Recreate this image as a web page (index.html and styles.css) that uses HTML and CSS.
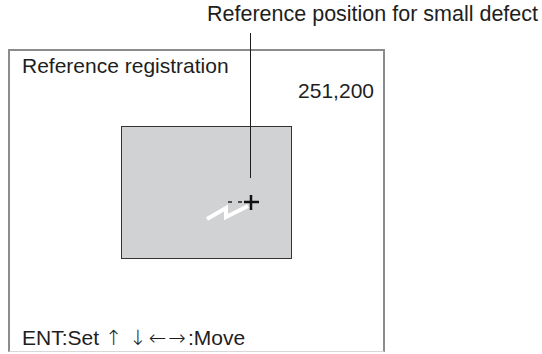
FILE: index.html
```html
<!DOCTYPE html>
<html lang="en">
<head>
  <meta charset="UTF-8" />
  <title>Reference registration</title>
  <meta name="viewport" content="width=device-width, initial-scale=1.0"/>
  <link rel="stylesheet" href="styles.css">
</head>
<body>

  <div class="figure">
    <p class="caption">Reference position for small defect</p>
    <span class="leader"></span>

    <div class="screen">
      <div class="title">Reference registration</div>
      <div class="coords">251,200</div>

      <div class="picture">
        <svg width="171" height="133" viewBox="0 0 171 133">
          <!-- small defect mark -->
          <polyline points="86,93 105,82 105,91 127,80" fill="none" stroke="#fff" stroke-width="4"/>
          <!-- dashed guide to the cursor -->
          <line x1="107" y1="76" x2="111" y2="76" stroke="#222" stroke-width="1.5"/>
          <line x1="117" y1="76" x2="121" y2="76" stroke="#222" stroke-width="1.5"/>
          <!-- cursor -->
          <line x1="123" y1="76" x2="138" y2="76" stroke="#111" stroke-width="2.5"/>
          <line x1="130" y1="69" x2="130" y2="84" stroke="#111" stroke-width="2.5"/>
        </svg>
      </div>

      <div class="footer">ENT:Set <span class="arrows">↑ ↓←→</span>:Move</div>
    </div>
  </div>

</body>
</html>
```

FILE: styles.css
```css
:root {
  --frame: #8c8c8e;
  --ink: #1e1e1e;
  --panel: #d1d2d4;
}

* {
  box-sizing: border-box;
  margin: 0;
  padding: 0;
}

body {
  font-family: 'Liberation Sans', Arial, sans-serif;
  background: #fff;
  color: var(--ink);
}

.figure {
  position: relative;
  width: 542px;
  height: 354px;
  padding: 2px 0 0 8px;
}

.caption {
  font-size: 21.5px;
  line-height: 24px;
  padding-left: 199px;
  height: 47px;
}

.leader {
  position: absolute;
  left: 250px;
  top: 33px;
  width: 1px;
  height: 145px;
  background: var(--ink);
}

.screen {
  width: 377px;
  height: 303px;
  border: 2px solid var(--frame);
  border-bottom: 1px solid #d8d8d8;
  display: flex;
  flex-direction: column;
  padding: 3px 9px 1px 12px;
}

.title,
.coords,
.footer {
  font-size: 21px;
  line-height: 24px;
}

.coords {
  align-self: flex-end;
  margin-top: 1px;
}

.picture {
  width: 171px;
  height: 133px;
  margin: 23px 0 0 99px;
  background: var(--panel);
  border: 1.5px solid #333;
}

.picture svg {
  display: block;
  margin: -1.5px 0 0 -1.5px;
}

.footer {
  margin-top: auto;
}

.arrows {
  font-family: 'DejaVu Sans', sans-serif;
  font-size: 21px;
  font-weight: 300;
  letter-spacing: 2px;
  word-spacing: -4px;
}
```
